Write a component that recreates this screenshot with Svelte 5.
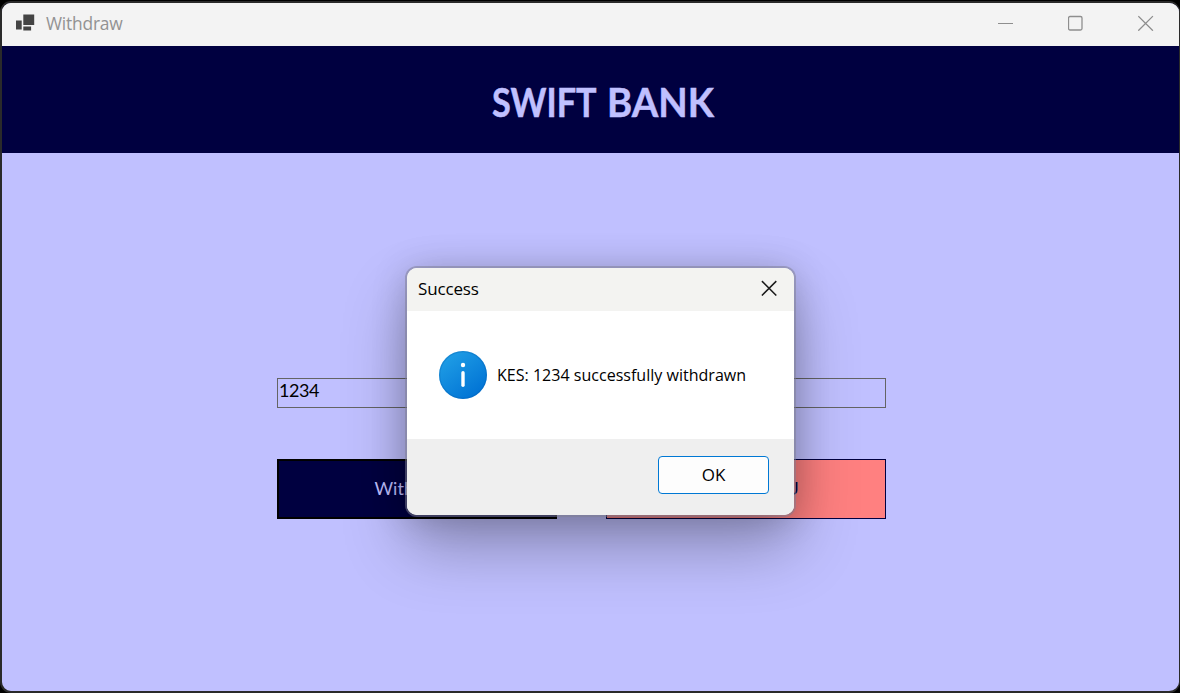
<script>
  let amount = $state('1234');
</script>

<div class="screen">
  <main class="window">
    <header class="titlebar">
      <svg class="app-icon" width="20" height="18" viewBox="0 0 20 18" fill="#444">
        <rect x="0" y="6.5" width="5.7" height="9" />
        <rect x="7.3" y="0.5" width="10.9" height="10.5" />
        <rect x="7.3" y="12.5" width="7.8" height="4" />
      </svg>
      <span class="caption">Withdraw</span>
      <div class="controls">
        <svg width="16" height="16" viewBox="0 0 16 16"><path d="M0 8.5h15" stroke-width="1" /></svg>
        <svg width="16" height="16" viewBox="0 0 16 16"><rect x=".5" y="1.5" width="13.5" height="13.5" rx="1.5" /></svg>
        <svg width="16" height="16" viewBox="0 0 16 16"><path d="M.3 1.1l14.6 14.6M14.9 1.1L.3 15.7" /></svg>
      </div>
    </header>
    <div class="banner"><h1><span class="word-a">SWIFT</span> <span class="word-b">BANK</span></h1></div>
    <section class="form">
      <div class="field"><span>{amount}</span></div>
      <div class="actions">
        <button class="primary"><span>Withdraw</span></button>
        <button class="secondary"><span>MAIN MENU</span></button>
      </div>
    </section>
  </main>

  <div class="dialog" role="dialog" aria-label="Success">
    <div class="dialog-title">
      <span class="success">Success</span>
      <svg width="16" height="16" viewBox="0 0 16 16"><path d="M.9 1.1l14.4 14.4M15.3 1.1L.9 15.5" /></svg>
    </div>
    <div class="message">
      <svg width="48" height="48" viewBox="0 0 48 48">
        <defs>
          <linearGradient id="info" x1="0.15" y1="0.1" x2="0.8" y2="0.95">
            <stop offset="0" stop-color="#1f9de5" />
            <stop offset="1" stop-color="#0072d4" />
          </linearGradient>
        </defs>
        <circle cx="24" cy="24" r="24" fill="url(#info)" />
        <circle cx="24" cy="24" r="23.3" fill="none" stroke="#075eab" stroke-opacity=".3" stroke-width="1.2" />
        <circle cx="24" cy="14" r="2.2" fill="#fff" />
        <path d="M24 21.7v12.6" stroke="#fff" stroke-width="3.4" stroke-linecap="round" />
      </svg>
      <span class="text">KES: {amount} successfully withdrawn</span>
    </div>
    <div class="dialog-footer"><button class="ok"><span>OK</span></button></div>
  </div>
</div>

<style>
  :global(body) { margin: 0; background: #000; }
  .screen {
    position: relative;
    box-sizing: border-box;
    width: 1180px;
    height: 693px;
    padding: 1px 0 0;
    overflow: hidden;
    background: #000;
    font-family: "Open Sans", "Noto Sans", sans-serif;
  }
  .window {
    box-sizing: border-box;
    width: 1180px;
    height: 692px;
    border: 2px solid #2a2a2a;
    border-right-width: 1px;
    border-radius: 11px;
    overflow: hidden;
    background: #c0c0ff;
    display: flex;
    flex-direction: column;
  }
  span, h1 { white-space: nowrap; }
  .titlebar {
    height: 43px;
    flex: none;
    display: flex;
    align-items: center;
    background: #f3f3f3;
    padding: 0 25px 0 14px;
    box-sizing: border-box;
  }
  .app-icon { margin-top: -4px; }
  .caption { margin-left: 10px; margin-top: -3px; font-size: 17.4px; color: #929292; letter-spacing: -.2px; }
  .controls { margin-left: auto; margin-top: -3px; display: flex; gap: 54px; }
  .controls svg { fill: none; stroke: #8e8e8e; stroke-width: 1.3; }
  .banner {
    height: 107px;
    flex: none;
    background: #000040;
    display: flex;
    align-items: center;
    padding: 5px 0 0 490px;
    box-sizing: border-box;
  }
  h1 { margin: 0; display: flex; color: #c0c0ff; font: bold 40px/1 Lato, sans-serif; -webkit-text-stroke: .5px #c0c0ff; }
  h1 span { display: block; transform-origin: 0 50%; }
  .word-a { width: 115px; transform: scaleX(.855); }
  .word-b { transform: scaleX(.955); }
  .form { padding: 225px 0 0 275px; width: 609px; display: flex; flex-direction: column; gap: 51px; }
  .field {
    box-sizing: border-box;
    height: 30px;
    border: 1px solid #646464;
    padding: 0 0 0 1px;
    font: 18px/22px Lato, sans-serif;
    letter-spacing: -.4px;
    color: #000;
  }
  .actions { display: flex; justify-content: space-between; }
  .actions button {
    width: 280px;
    height: 60px;
    box-sizing: border-box;
    padding: 0 1px 2px 0;
    border-radius: 0;
    font: 18px/1 Lato, sans-serif;
  }
  .actions .primary { background: #000040; color: #c0c0ff; border: 2px solid #000; font-size: 18px; padding-right: 6px; }
  .secondary { background: #ff8080; color: #000040; border: 1px solid #000040; }
  .dialog {
    position: absolute;
    left: 407px;
    top: 268px;
    width: 387px;
    height: 247px;
    border-radius: 10px;
    display: flex;
    flex-direction: column;
    background: #fff;
    box-shadow: 0 0 0 2px rgba(125, 125, 145, .5), 0 32px 64px rgba(0, 0, 0, .29), 0 2px 36px rgba(0, 0, 0, .2);
  }
  .dialog-title {
    height: 43px;
    box-sizing: border-box;
    padding: 0 17px 3px 11px;
    display: flex;
    justify-content: space-between;
    align-items: center;
    background: #f3f3f1;
    border-radius: 10px 10px 0 0;
    font-size: 17px;
    color: #000;
  }
  .success { letter-spacing: -.15px; }
  .dialog-title svg { fill: none; stroke: #1a1a1a; stroke-width: 1.5; }
  .message { height: 128px; box-sizing: border-box; display: flex; align-items: center; padding-left: 32px; gap: 10px; }
  .text { font-size: 16.8px; color: #000; padding-bottom: 2px; transform: scaleX(.956); transform-origin: 0 50%; }
  .dialog-footer {
    height: 76px;
    box-sizing: border-box;
    display: flex;
    justify-content: flex-end;
    padding: 17px 25px 0 0;
    background: #efefef;
    border-radius: 0 0 10px 10px;
  }
  .ok {
    width: 111px;
    height: 38px;
    padding: 0 0 2px;
    box-sizing: border-box;
    border: 1px solid #0078d4;
    border-radius: 4px;
    background: #fdfdfd;
    color: #000;
    font: 17px/1 "Open Sans", sans-serif;
  }
</style>
